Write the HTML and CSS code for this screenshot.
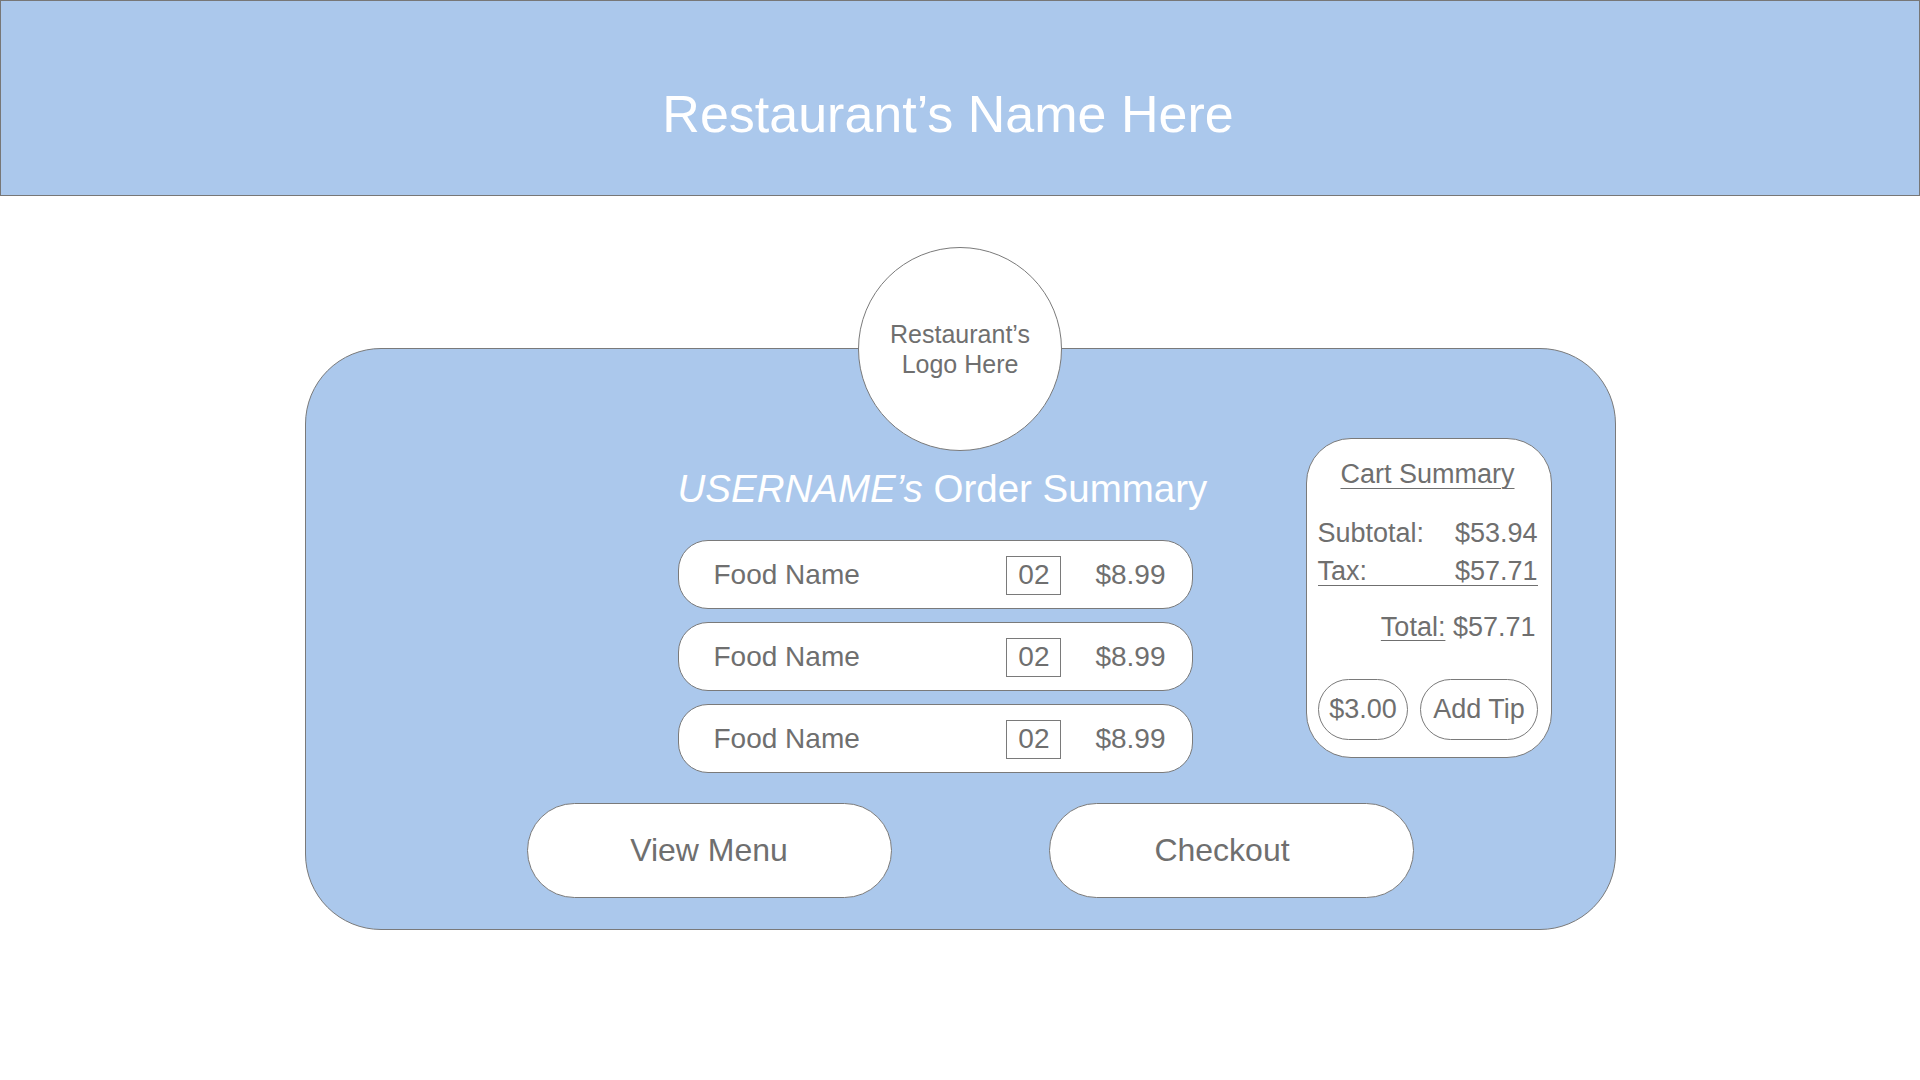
FILE: index.html
```html
<!DOCTYPE html>
<html lang="en">
<head>
<meta charset="utf-8">
<title>Order Summary</title>
<link rel="stylesheet" href="styles.css">
</head>
<body>
<header class="topbar">
  <h1 class="brand">Restaurant’s Name Here</h1>
</header>
<main class="page">
  <section class="card">
    <div class="logo"><span>Restaurant’s<br>Logo Here</span></div>
    <div class="card-top">
      <div class="order">
        <h2 class="order-title"><em>USERNAME’s</em> Order Summary</h2>
        <ul class="items">
          <li class="item"><span class="item-name">Food Name</span><span class="qty">02</span><span class="price">$8.99</span></li>
          <li class="item"><span class="item-name">Food Name</span><span class="qty">02</span><span class="price">$8.99</span></li>
          <li class="item"><span class="item-name">Food Name</span><span class="qty">02</span><span class="price">$8.99</span></li>
        </ul>
      </div>
      <aside class="cart">
        <h3 class="cart-title">Cart Summary</h3>
        <div class="cart-row"><span>Subtotal:</span><span>$53.94</span></div>
        <div class="cart-row tax"><span>Tax:</span><span>$57.71</span></div>
        <div class="cart-total"><span class="u">Total:</span> $57.71</div>
        <div class="tip">
          <button class="pill tip-amount">$3.00</button>
          <button class="pill tip-add">Add Tip</button>
        </div>
      </aside>
    </div>
    <div class="actions">
      <button class="action">View Menu</button>
      <button class="action action-checkout">Checkout</button>
    </div>
  </section>
</main>
</body>
</html>
```
FILE: styles.css
```css
body {
  margin: 0;
  font-family: "Liberation Sans", Arial, sans-serif;
  color: #6f6f6f;
  background: #ffffff;
}

.topbar {
  box-sizing: border-box;
  height: 196px;
  background: #abc8ec;
  border: 1px solid #777777;
  padding: 83px 24px 0 0;
  text-align: center;
}

.brand {
  margin: 0;
  font-size: 52px;
  line-height: 60px;
  font-weight: 400;
  color: #ffffff;
}

.page {
  padding-top: 152px;
}

.card {
  position: relative;
  box-sizing: border-box;
  width: 1311px;
  margin: 0 auto;
  background: #abc8ec;
  border: 1px solid #7a7a7a;
  border-radius: 76px;
  padding: 89px 0 31px 0;
}

.logo {
  position: absolute;
  top: -102px;
  left: 50%;
  margin-left: -102px;
  box-sizing: border-box;
  width: 204px;
  height: 204px;
  border-radius: 50%;
  background: #ffffff;
  border: 1px solid #7a7a7a;
  display: flex;
  align-items: center;
  justify-content: center;
  text-align: center;
  font-size: 25px;
  line-height: 30px;
  color: #6f6f6f;
}

.card-top {
  display: flex;
  align-items: flex-start;
  gap: 113px;
  padding-left: 372px;
  height: 335px;
}

.order {
  width: 515px;
  padding-top: 28px;
}

.order-title {
  margin: 0 0 28px;
  font-size: 38.5px;
  line-height: 46px;
  font-weight: 400;
  color: #ffffff;
  white-space: nowrap;
}

.order-title em {
  font-style: italic;
}

.items {
  list-style: none;
  margin: 0;
  padding: 0;
  display: flex;
  flex-direction: column;
  gap: 13px;
}

.item {
  box-sizing: border-box;
  height: 69px;
  display: flex;
  align-items: center;
  background: #ffffff;
  border: 1px solid #7a7a7a;
  border-radius: 30px;
  padding: 1px 26px 0 35px;
  font-size: 28px;
}

.item-name {
  flex: 1;
}

.qty {
  box-sizing: border-box;
  width: 55px;
  height: 39px;
  border: 1px solid #7a7a7a;
  display: flex;
  align-items: center;
  justify-content: center;
  margin-right: 34px;
}

.cart {
  box-sizing: border-box;
  width: 246px;
  height: 320px;
  background: #ffffff;
  border: 1px solid #7a7a7a;
  border-radius: 45px;
  padding: 18px 13px 0 11px;
  font-size: 27px;
}

.cart-title {
  margin: 0;
  font-size: 27px;
  line-height: 34px;
  font-weight: 400;
  text-align: center;
  text-decoration: underline;
  text-decoration-thickness: 1px;
  text-underline-offset: 5px;
}

.cart-row {
  display: flex;
  justify-content: space-between;
  line-height: 34px;
  margin-top: 25px;
}

.cart-row.tax {
  line-height: 28px;
  margin-top: 7px;
  border-bottom: 1px solid #6f6f6f;
}

.cart-total {
  text-align: right;
  line-height: 34px;
  margin-top: 24px;
  padding-right: 2px;
}

.cart-total .u {
  text-decoration: underline;
  text-decoration-thickness: 1px;
  text-underline-offset: 4px;
}

.tip {
  display: flex;
  gap: 12px;
  margin-top: 35px;
}

.pill {
  box-sizing: border-box;
  height: 61px;
  padding: 0;
  border: 1px solid #7a7a7a;
  border-radius: 31px;
  background: #ffffff;
  font-family: inherit;
  font-size: 27px;
  color: #6f6f6f;
}

.tip-amount {
  width: 93px;
}

.tip-add {
  width: 120px;
}

.actions {
  display: flex;
  gap: 157px;
  padding-left: 221px;
  margin-top: 30px;
}

.action {
  box-sizing: border-box;
  width: 365px;
  height: 95px;
  padding: 0;
  border: 1px solid #7a7a7a;
  border-radius: 48px;
  background: #ffffff;
  font-family: inherit;
  font-size: 32px;
  color: #6f6f6f;
}

.action-checkout {
  padding-right: 18px;
}
```
